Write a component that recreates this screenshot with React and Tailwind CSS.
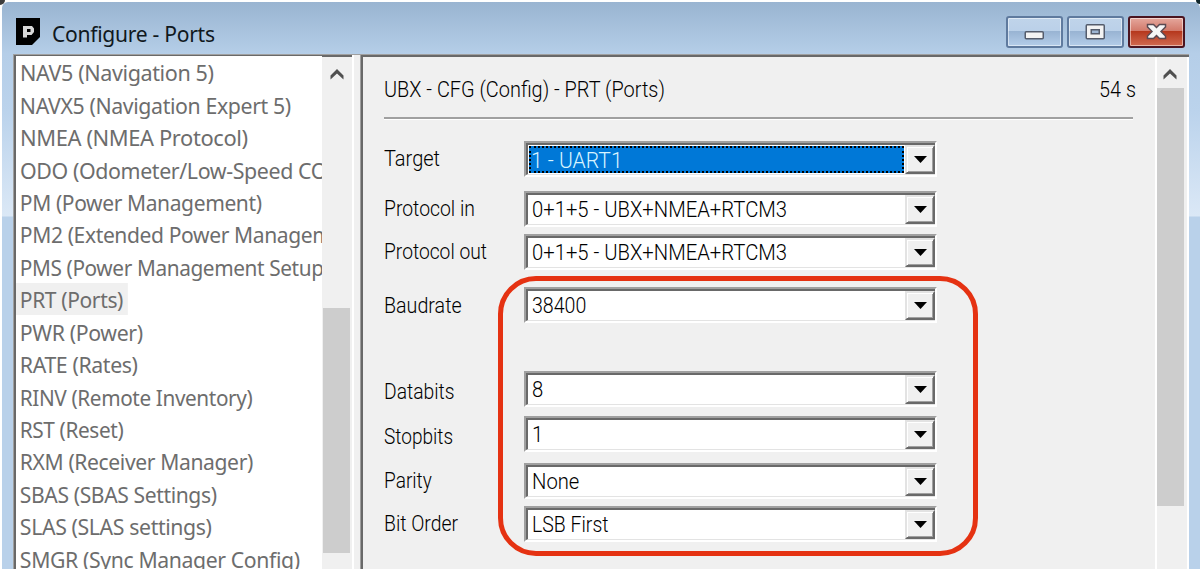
import React from "react";

const messages = [
  { name: "NAV5 (Navigation 5)", fit: "scale-x-[0.98]" },
  { name: "NAVX5 (Navigation Expert 5)", fit: "scale-x-[0.968]" },
  { name: "NMEA (NMEA Protocol)", fit: "scale-x-[0.996]" },
  { name: "ODO (Odometer/Low-Speed COG", fit: "scale-x-[0.972]" },
  { name: "PM (Power Management)", fit: "scale-x-[0.955]" },
  { name: "PM2 (Extended Power Management)", fit: "scale-x-[0.957]" },
  { name: "PMS (Power Management Setup)", fit: "scale-x-[0.945]" },
  { name: "PRT (Ports)", fit: "scale-x-[0.956]", selected: true },
  { name: "PWR (Power)", fit: "scale-x-[0.968]" },
  { name: "RATE (Rates)", fit: "scale-x-[0.967]" },
  { name: "RINV (Remote Inventory)", fit: "scale-x-[0.943]" },
  { name: "RST (Reset)", fit: "scale-x-[0.945]" },
  { name: "RXM (Receiver Manager)", fit: "scale-x-[0.959]" },
  { name: "SBAS (SBAS Settings)", fit: "scale-x-[0.958]" },
  { name: "SLAS (SLAS settings)", fit: "scale-x-[0.967]" },
  { name: "SMGR (Sync Manager Config)", fit: "scale-x-[0.965]" },
];

const fields = [
  { label: "Target", value: "1 - UART1", row: "mb-[14px]", labelFit: "scale-x-[0.91] pb-px", valueFit: "scale-x-[0.957]", focused: true },
  { label: "Protocol in", value: "0+1+5 - UBX+NMEA+RTCM3", row: "mb-[7px]", labelFit: "scale-x-[0.88]", valueFit: "scale-x-[0.92]" },
  { label: "Protocol out", value: "0+1+5 - UBX+NMEA+RTCM3", row: "mb-[17px]", labelFit: "scale-x-[0.874]", valueFit: "scale-x-[0.92]" },
  { label: "Baudrate", value: "38400", row: "mb-[48px]", labelFit: "scale-x-[0.894] pt-px", valueFit: "scale-x-[0.89]" },
  { label: "Databits", value: "8", row: "mb-[9px]", labelFit: "scale-x-[0.876] pt-[5px]", valueFit: "scale-x-[0.92]" },
  { label: "Stopbits", value: "1", row: "mb-[11px]", labelFit: "scale-x-[0.865] pt-[5px]", valueFit: "scale-x-[0.92]" },
  { label: "Parity", value: "None", row: "mb-[7px]", labelFit: "scale-x-[0.868]", valueFit: "scale-x-[0.92]" },
  { label: "Bit Order", value: "LSB First", row: "", labelFit: "scale-x-[0.882]", valueFit: "scale-x-[0.885]" },
];

function ScrollArrow() {
  return (
    <svg width="14" height="12" viewBox="0 0 14 12" className="shrink-0">
      <path d="M0.5 11.5V7.5L7 1l6.500 6.500v4L7 5.500z" fill="#505050" />
    </svg>
  );
}

function WindowButton({ kind }) {
  const isClose = kind === "close";
  return (
    <button
      className={`relative flex h-8 w-[57px] items-center justify-center overflow-hidden rounded-[3px] border-2 ${
        isClose ? "border-[#4a1420] bg-linear-to-b from-[#e5a79d] to-[#d27a6b] to-45%" : "border-[#5f7a9e] bg-linear-to-b from-[#c0d4ea] to-[#b4cce7]"
      }`}
    >
      <span className={`absolute inset-x-0 top-[13px] bottom-0 bg-linear-to-b ${isClose ? "from-[#b5361b] to-[#d0694f]" : "from-[#98b3d2] to-[#b4cde9]"}`} />
      <span className="absolute inset-0 rounded-[1px] border border-white/50" />
      <svg width="24" height="20" viewBox="0 0 24 20" className="relative">
        {kind === "minimize" && <rect x="2.250" y="9.750" width="18" height="7" rx="1" fill="#f3f3f3" stroke="#545c6c" strokeWidth="1.500" />}
        {kind === "maximize" && (
          <>
            <rect x="2.250" y="2.750" width="18" height="14" rx="1" fill="#f3f3f3" stroke="#545c6c" strokeWidth="1.500" />
            <rect x="7.250" y="7.750" width="8" height="4" fill="#9db6d4" stroke="#545c6c" strokeWidth="1.500" />
          </>
        )}
        {isClose && (
          <path
            d="M2.500 2.500h6l3 3 3-3h6v2.500L16 9.500l4.500 4.500v2.500h-6l-3-3-3 3h-6V14L7 9.500 2.500 5z"
            fill="#f6f6f6"
            stroke="#5b4a52"
            strokeWidth="1.500"
          />
        )}
      </svg>
    </button>
  );
}

function TitleBar() {
  return (
    <header className="flex h-[52px] shrink-0 justify-between">
      <div className="flex pt-4 pl-[14px]">
        <svg width="24" height="27" viewBox="0 0 24 27">
          <path d="M0 0h24v19l-8 8H0z" fill="#000" />
          <path d="M7 8h9l2 2.500v3.500l-2.500 3H11v2.500H7zM11 11v3h3.500v-3z" fill="#d8d8d8" fillRule="evenodd" />
        </svg>
        <h1 className="-mt-px ml-3 h-8 origin-left scale-x-[0.958] font-['Noto_Sans',sans-serif] text-[22px] leading-8 tracking-[-0.3px] whitespace-nowrap text-[#101820]">
          Configure - Ports
        </h1>
      </div>
      <div className="flex gap-1 pt-[14px] pr-[15px]">
        <WindowButton kind="minimize" />
        <WindowButton kind="maximize" />
        <WindowButton kind="close" />
      </div>
    </header>
  );
}

function MessageList() {
  return (
    <nav className="flex w-[338px] border-t-2 border-l-2 border-[#696969]">
      <ul className="-mt-px w-[306px] overflow-hidden bg-white font-['Noto_Sans',sans-serif] text-[22px] text-[#6d6d6d]">
        {messages.map((m) => (
          <li key={m.name} className="flex h-[32.45px] items-center whitespace-nowrap">
            <span className={`${m.fit} h-8 origin-left pr-[5px] pl-1 leading-8 tracking-[-0.4px] ${m.selected ? "bg-[#f0f0f0]" : ""}`}>{m.name}</span>
          </li>
        ))}
      </ul>
      <div className="flex w-7 flex-col items-center bg-[#f0f0f0] pt-[11px] pl-px">
        <ScrollArrow />
        <div className="mt-[228px] h-[245px] w-full bg-[#cdcdcd]" />
      </div>
    </nav>
  );
}

function ComboBox({ value, fit, focused }) {
  return (
    <div className="flex h-[36px] w-[413px] border-2 border-t-[#a0a0a0] border-r-white border-b-white border-l-[#a0a0a0]">
      <div className="flex flex-1 border-t-2 border-b border-l-2 border-t-[#696969] border-b-[#e3e3e3] border-l-[#696969] bg-white">
        <div className={`flex flex-1 items-center ${focused ? "p-px" : ""}`}>
          <div className={`flex-1 whitespace-nowrap ${focused ? "h-full border-2 border-dotted border-black bg-[#0078d7] leading-[25px] text-[#d8f4ff]" : "pl-1"}`}>
            <span className={`block origin-left ${fit}`}>{value}</span>
          </div>
        </div>
        <div className="flex w-[30px] items-center justify-center border-2 border-t-[#e3e3e3] border-r-[#696969] border-b-[#696969] border-l-[#e3e3e3] bg-[#f0f0f0] shadow-[inset_1px_1px_0_white,inset_-1px_-1px_0_#a0a0a0]">
          <svg width="13" height="7" viewBox="0 0 13 7">
            <path d="M0 0h13L6.500 7z" fill="#000" />
          </svg>
        </div>
      </div>
    </div>
  );
}

function PortSettings() {
  return (
    <main className="relative flex flex-1 border-t-2 border-l-2 border-[#696969] bg-[#f0f0f0] font-['Roboto',sans-serif] text-[22px] font-light text-black">
      <section className="flex-1 pt-4 pl-[21px]">
        <div className="flex h-[46px] w-[749px] items-start justify-between border-b-2 border-[#a0a0a0] pt-px shadow-[0_1px_0_white]">
          <h2 className="origin-left scale-x-[0.905] leading-8">UBX - CFG (Config) - PRT (Ports)</h2>
          <span className="-mr-[3px] origin-right scale-x-[0.9] leading-8">54 s</span>
        </div>
        <div className="pt-[22px]">
          {fields.map((f) => (
            <div key={f.label} className={`flex h-9 items-center ${f.row}`}>
              <label className={`${f.labelFit} w-[140px] origin-left leading-7 whitespace-nowrap`}>{f.label}</label>
              <ComboBox value={f.value} fit={f.valueFit} focused={f.focused} />
            </div>
          ))}
        </div>
      </section>
      <aside className="flex w-[34px] flex-col items-center border-r-2 border-l-2 border-white bg-[#f0f0f0] pt-[11px] pr-[4px]">
        <ScrollArrow />
        <div className="mt-[8px] h-[418px] w-[27px] bg-[#cdcdcd]" />
      </aside>
      {/* annotation around the serial settings */}
      <div className="pointer-events-none absolute top-[219px] left-[135px] h-[280px] w-[480px] rounded-[38px] border-[5px] border-[#e53212]" />
    </main>
  );
}

export default function App() {
  return (
    <div className="relative h-[569px] w-[1200px] overflow-hidden bg-white pt-[2px] pl-[2px]">
      {/* desktop showing behind the rounded corners */}
      <span className="absolute top-0 left-0 size-[5px] rounded-br-full bg-[#3c3c3c]" />
      <span className="absolute top-0 right-0 size-1 rounded-bl-full bg-[#10262c]" />
      <div className="flex h-[567px] flex-col rounded-t-md bg-[linear-gradient(#99b4d1_0px,#b5cee8_52px,#bbd3ec_110px,#dbe8f6_214px,#b9d1ea_215px)]">
        <TitleBar />
        <div className="flex min-h-0 flex-1 overflow-hidden pr-[11px] pl-[11px]">
          <div className="flex flex-1 border-t border-l border-[#a0a0a0] bg-[#f0f0f0]">
            <MessageList />
            <div className="w-[9px] border-r border-l-2 border-r-[#a0a0a0] border-l-white bg-[#f0f0f0]" />
            <PortSettings />
          </div>
        </div>
      </div>
    </div>
  );
}
